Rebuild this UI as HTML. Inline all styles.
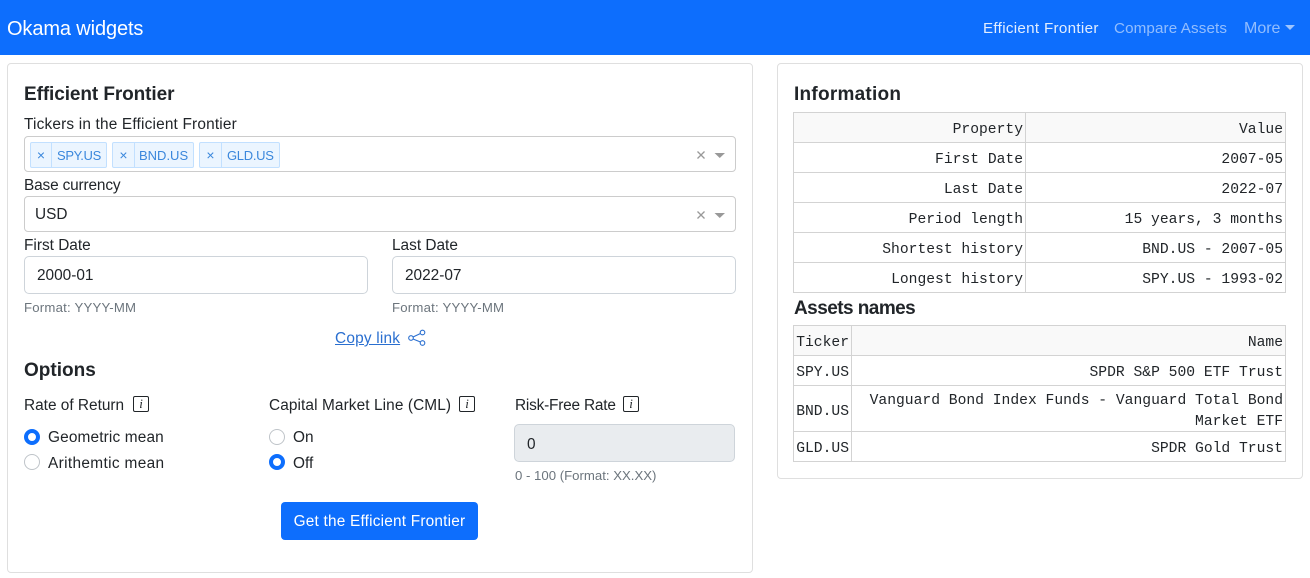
<!DOCTYPE html>
<html lang="en">
<head>
<meta charset="utf-8">
<title>Okama widgets</title>
<style>
html,body{margin:0;padding:0;background:#fff}
body{width:1310px;height:578px;position:relative;overflow:hidden;font-family:"Liberation Sans",sans-serif;color:#212529;font-size:15.4px}
.a{position:absolute;box-sizing:border-box}
.t{position:absolute;white-space:nowrap;line-height:20px;height:20px}
.nav{left:0;top:0;width:1310px;height:55px;background:#0d6efd}
.card{background:#fff;border:1px solid #dfdfdf;border-radius:4px}
h5{position:absolute;margin:0;font-size:19px;font-weight:700;line-height:24px;white-space:nowrap}
.sel{background:#fff;border:1px solid #ccc;border-radius:4px}
.inp{background:#fff;border:1px solid #ced4da;border-radius:5px}
.chip{position:absolute;top:142px;height:26px;box-sizing:border-box;background:#ebf5ff;border:1px solid #c2e0ff;border-radius:2px;color:#3a87dc;font-size:13px;line-height:26px;white-space:nowrap}
.chip i{position:absolute;left:0;top:-1px;bottom:0;border-right:1px solid #c2e0ff;font-style:normal;text-align:center;font-size:14px}
.chip b{position:absolute;top:0;font-weight:400}
.help{font-size:13.2px;color:#6c757d}
.info{position:absolute;width:16px;height:16px;box-sizing:border-box;border:1px solid #212529;border-radius:2px;font:italic 13px/14px "Liberation Serif",serif;text-align:center}
.radio{position:absolute;width:16px;height:16px;box-sizing:border-box;border-radius:50%;border:1px solid #bfc4c9;background:#fff}
.radio.on{border:4.5px solid #0d6efd}
table{position:absolute;border-collapse:collapse;table-layout:fixed;font-family:"Liberation Mono",monospace;font-size:14.67px;color:#212529}
td,th{border:1px solid #d3d3d3;text-align:right;padding:5px 2px 0 2px;font-weight:400;height:24px;line-height:21px;box-sizing:content-box}
td.m{padding-top:3px;height:42px}
td.m span{position:relative;top:2px;display:block}
th{background:#f9f9f9}
a{color:#2a6fd0}
</style>
</head>
<body>
<div class="a nav"></div>
<div class="t" style="left:7px;top:19px;color:#fff;font-size:20px;letter-spacing:-.12px">Okama widgets</div>
<div class="t" style="left:983px;top:19px;color:rgba(255,255,255,.88);font-size:15.2px;letter-spacing:.3px">Efficient Frontier</div>
<div class="t" style="left:1114px;top:19px;color:rgba(255,255,255,.55);font-size:15.2px;letter-spacing:.12px">Compare Assets</div>
<div class="t" style="left:1244px;top:19px;color:rgba(255,255,255,.55);font-size:16px">More</div>
<svg class="a" style="left:1285px;top:25px" width="10" height="5"><path d="M0 0H10L5 5Z" fill="rgba(255,255,255,.6)"/></svg>

<div class="a card" style="left:7px;top:63px;width:746px;height:510px"></div>
<div class="a card" style="left:777px;top:63px;width:526px;height:416px"></div>

<h5 style="left:24px;top:83px;letter-spacing:-.09px">Efficient Frontier</h5>
<div class="t" style="left:24px;top:115px;letter-spacing:.18px">Tickers in the Efficient Frontier</div>
<div class="a sel" style="left:24px;top:136px;width:712px;height:36px"></div>
<div class="chip" style="left:30px;width:77px"><i style="width:20px">×</i><b style="left:26px;letter-spacing:-.35px">SPY.US</b></div>
<div class="chip" style="left:112px;width:82px"><i style="width:21px">×</i><b style="left:26px">BND.US</b></div>
<div class="chip" style="left:199px;width:81px"><i style="width:21px">×</i><b style="left:27px;letter-spacing:-.3px">GLD.US</b></div>
<svg class="a" style="left:696px;top:150px" width="30" height="10"><path d="M1.500 1.500L8.500 8.500M8.500 1.500L1.500 8.500" stroke="#999" stroke-width="1.300" fill="none"/><path d="M18.500 3H29L23.750 8Z" fill="#999"/></svg>

<div class="t" style="left:24px;top:176px;letter-spacing:-.15px">Base currency</div>
<div class="a sel" style="left:24px;top:196px;width:712px;height:36px"></div>
<div class="t" style="left:35px;top:205px">USD</div>
<svg class="a" style="left:696px;top:210px" width="30" height="10"><path d="M1.500 1.500L8.500 8.500M8.500 1.500L1.500 8.500" stroke="#999" stroke-width="1.300" fill="none"/><path d="M18.500 3H29L23.750 8Z" fill="#999"/></svg>

<div class="t" style="left:24px;top:236px">First Date</div>
<div class="t" style="left:392px;top:236px">Last Date</div>
<div class="a inp" style="left:24px;top:256px;width:344px;height:38px"></div>
<div class="a inp" style="left:392px;top:256px;width:344px;height:38px"></div>
<div class="t" style="left:37px;top:266px">2000-01</div>
<div class="t" style="left:405px;top:266px">2022-07</div>
<div class="t help" style="left:24px;top:298px;letter-spacing:.2px">Format: YYYY-MM</div>
<div class="t help" style="left:392px;top:298px;letter-spacing:.2px">Format: YYYY-MM</div>

<a class="t" href="#" style="left:335px;top:329px;font-size:15.4px;letter-spacing:.2px">Copy link</a>
<svg class="a" style="left:408px;top:329px" width="18" height="18" fill="none" stroke="#2a6fd0" stroke-width="1.100"><circle cx="14.500" cy="3.500" r="2.300"/><circle cx="14.500" cy="14" r="2.300"/><circle cx="3" cy="9" r="2.300"/><path d="M5 8L12.500 4.500M5 10L12.500 13"/></svg>

<h5 style="left:24px;top:359px">Options</h5>

<div class="t" style="left:24px;top:396px">Rate of Return</div>
<div class="info" style="left:133px;top:396px">i</div>
<div class="radio on" style="left:24px;top:429px"></div>
<div class="t" style="left:48px;top:428px;letter-spacing:.15px">Geometric mean</div>
<div class="radio" style="left:24px;top:454px"></div>
<div class="t" style="left:48px;top:454px;letter-spacing:.35px">Arithemtic mean</div>

<div class="t" style="left:269px;top:396px;letter-spacing:.1px">Capital Market Line (CML)</div>
<div class="info" style="left:459px;top:396px">i</div>
<div class="radio" style="left:269px;top:429px"></div>
<div class="t" style="left:293px;top:428px">On</div>
<div class="radio on" style="left:269px;top:454px"></div>
<div class="t" style="left:293px;top:454px">Off</div>

<div class="t" style="left:515px;top:396px;letter-spacing:-.2px">Risk-Free Rate</div>
<div class="info" style="left:623px;top:396px">i</div>
<div class="a inp" style="left:514px;top:424px;width:221px;height:38px;background:#e9ecef"></div>
<div class="t" style="left:527px;top:435px">0</div>
<div class="t help" style="left:515px;top:466px">0 - 100 (Format: XX.XX)</div>

<div class="a" style="left:281px;top:502px;width:197px;height:38px;background:#0d6efd;border-radius:4px"></div>
<div class="t" style="left:281px;width:197px;top:512px;color:#fff;text-align:center;letter-spacing:.2px">Get the Efficient Frontier</div>

<h5 style="left:794px;top:83px;letter-spacing:.25px">Information</h5>
<table style="left:793px;top:112px;width:493px">
<colgroup><col style="width:232px"><col></colgroup>
<tr><th>Property</th><th>Value</th></tr>
<tr><td>First Date</td><td>2007-05</td></tr>
<tr><td>Last Date</td><td>2022-07</td></tr>
<tr><td>Period length</td><td>15 years, 3 months</td></tr>
<tr><td>Shortest history</td><td>BND.US - 2007-05</td></tr>
<tr><td>Longest history</td><td>SPY.US - 1993-02</td></tr>
</table>

<h5 style="left:794px;top:297px;letter-spacing:-.55px">Assets names</h5>
<table style="left:793px;top:325px;width:493px">
<colgroup><col style="width:58px"><col></colgroup>
<tr><th>Ticker</th><th>Name</th></tr>
<tr><td>SPY.US</td><td>SPDR S&amp;P 500 ETF Trust</td></tr>
<tr><td class="m"><span>BND.US</span></td><td class="m"><span>Vanguard Bond Index Funds - Vanguard Total Bond Market ETF</span></td></tr>
<tr><td>GLD.US</td><td>SPDR Gold Trust</td></tr>
</table>
</body>
</html>
